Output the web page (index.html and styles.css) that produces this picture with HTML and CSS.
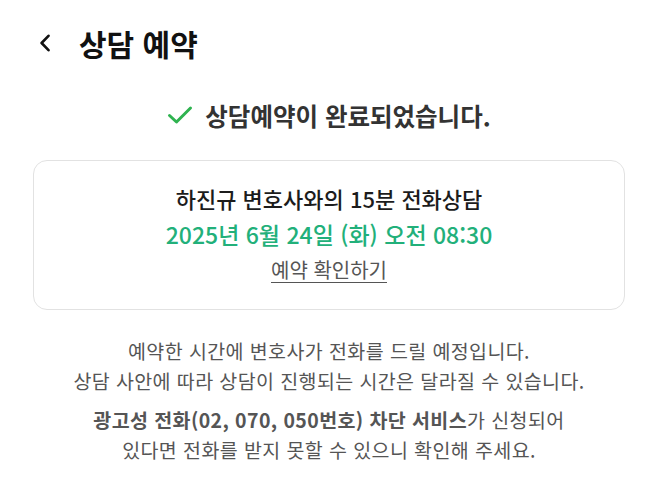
FILE: index.html
```html
<!DOCTYPE html>
<html lang="ko">
<head>
<meta charset="utf-8">
<title>상담 예약</title>
<link rel="stylesheet" href="styles.css">
</head>
<body>
<header class="topbar">
  <button class="back" aria-label="뒤로">
    <svg width="12" height="18" viewBox="0 0 12 18"><path d="M9.5 1.8 L2.6 9 L9.5 16.2" fill="none" stroke="#111" stroke-width="2.6" stroke-linecap="round" stroke-linejoin="round"/></svg>
  </button>
  <h1 class="title">상담 예약</h1>
</header>

<main class="content">
  <div class="done">
    <svg class="done-icon" width="26" height="20" viewBox="0 0 26 20"><path d="M2.5 10.5 L9.5 17 L23.5 3" fill="none" stroke="#2fb350" stroke-width="3" stroke-linecap="round" stroke-linejoin="round"/></svg>
    <span class="done-text">상담예약이 완료되었습니다.</span>
  </div>

  <section class="card">
    <p class="card-title">하진규 변호사와의 15분 전화상담</p>
    <p class="card-date">2025년 6월 24일 (화) 오전 08:30</p>
    <a class="card-link" href="#">예약 확인하기</a>
  </section>

  <div class="notice">
    <p>예약한 시간에 변호사가 전화를 드릴 예정입니다.<br>상담 사안에 따라 상담이 진행되는 시간은 달라질 수 있습니다.</p>
    <p><strong>광고성 전화(02, 070, 050번호) 차단 서비스</strong>가 신청되어<br>있다면 전화를 받지 못할 수 있으니 확인해 주세요.</p>
  </div>
</main>
</body>
</html>
```

FILE: styles.css
```css
html, body {
  margin: 0;
  padding: 0;
  background: #fff;
}

body {
  font-family: "Noto Sans CJK KR", "Noto Sans", sans-serif;
  color: #222;
}

.topbar {
  display: flex;
  align-items: center;
  height: 86px;
  padding-left: 38px;
  gap: 27px;
}

.back {
  display: flex;
  align-items: center;
  justify-content: center;
  padding: 0;
  border: 0;
  background: none;
  width: 14px;
  height: 20px;
}

.title {
  margin: 0;
  font-size: 30px;
  font-weight: 700;
  color: #111;
}

.content {
  display: flex;
  flex-direction: column;
  align-items: center;
}

.done {
  display: flex;
  align-items: center;
  gap: 12px;
  margin-top: 11px;
  height: 36px;
}

.done-text {
  font-size: 24.5px;
  font-weight: 700;
  color: #333;
}

.card {
  box-sizing: border-box;
  align-self: stretch;
  margin: 27px 33px 0;
  height: 150px;
  border: 1.5px solid #e2e2e2;
  border-radius: 14px;
  display: flex;
  flex-direction: column;
  align-items: center;
  padding-top: 21px;
}

.card p {
  margin: 0;
}

.card-title {
  font-size: 22px;
  font-weight: 500;
  color: #1c1c1c;
  line-height: 33px;
}

.card-date {
  font-size: 23px;
  font-weight: 500;
  color: #22b07a;
  line-height: 38px;
}

.card-link {
  font-size: 20px;
  color: #555;
  line-height: 34px;
  text-decoration: underline;
  text-underline-offset: 4px;
  text-decoration-thickness: 1px;
}

.notice {
  margin-top: 26px;
  text-align: center;
  font-size: 19.5px;
  color: #555;
  line-height: 30px;
  letter-spacing: 0.4px;
}

.notice p {
  margin: 0 0 9px;
}

.notice strong {
  font-weight: 700;
  color: #555;
}
```
